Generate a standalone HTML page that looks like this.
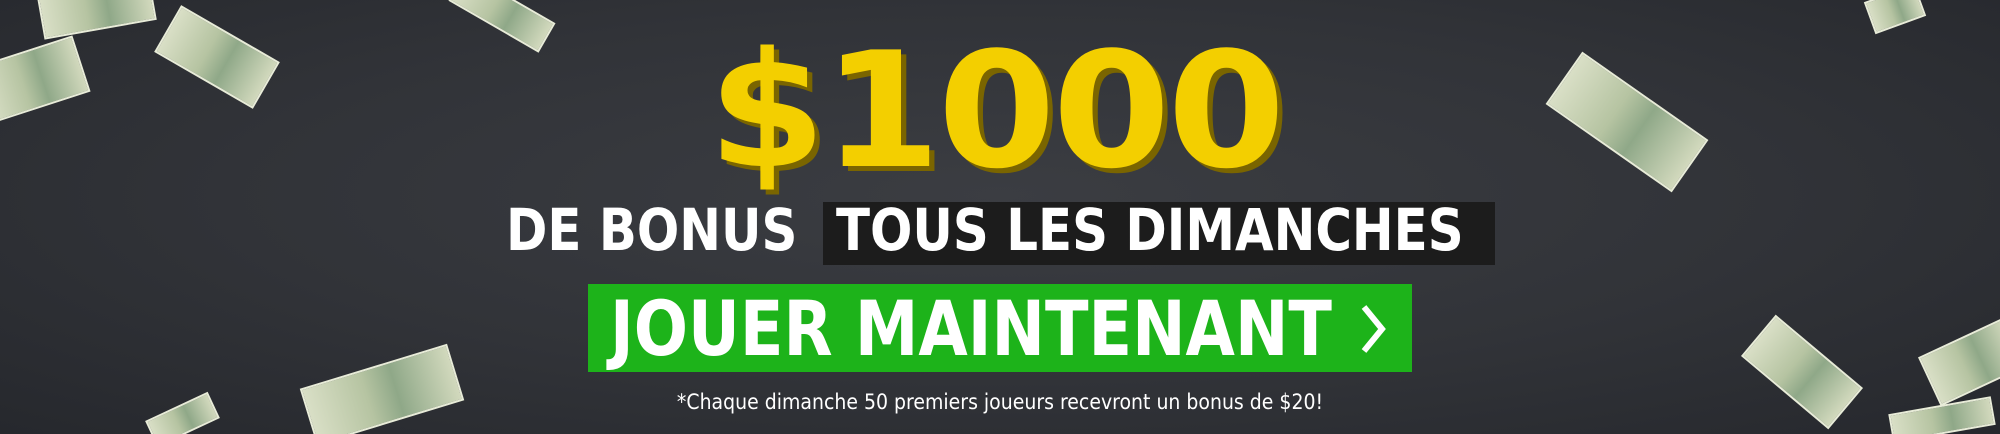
<!DOCTYPE html>
<html style="background:#2f3137;height:434px;overflow:hidden"><head><meta charset="utf-8"><style>
html,body{margin:0;padding:0}
body{width:2000px;height:434px;overflow:hidden;background:#2f3137;font-family:"DejaVu Sans","Liberation Sans",sans-serif}
.wrap{position:relative;width:2000px;height:434px;overflow:hidden}
.bg{position:absolute;left:0;top:0;width:2000px;height:434px;background:radial-gradient(ellipse at 50% 45%,#3b3d42 0%,#313338 55%,#26282d 100%)}
.t{position:absolute;white-space:nowrap;font-weight:bold}
.big{left:708px;top:31px;font-size:160px;color:#f3cf00;letter-spacing:-3px;text-shadow:5px 5px 0 #7a6500;transform:scaleX(1.06);transform-origin:left top;line-height:1}
.dark{position:absolute;left:823px;top:202px;width:672px;height:63px;background:#1c1c1c}
.l2{top:200px;font-size:58px;color:#fff;line-height:60px;transform:scaleX(0.86);transform-origin:left top}
.btn{position:absolute;left:588px;top:284px;width:824px;height:88px;background:#1db31a}
.l3{left:610px;top:289px;font-size:76px;color:#fff;line-height:80px;transform:scaleX(0.84);transform-origin:left top}
.foot{left:0;width:2000px;text-align:center;top:390px;font-size:21px;color:#fff;font-weight:normal;transform:scaleX(0.9);transform-origin:center top}
.bill{position:absolute;background:linear-gradient(90deg,#d9dfc6,#b6c4a2 40%,#8fa888 60%,#d2d9bd);border:2px solid #e8ecd8}
</style></head><body><div class="wrap">
<div class="bg"></div>
<div class="bill" style="left:-20px;top:50px;width:100px;height:55px;transform:rotate(-18deg)"></div>
<div class="bill" style="left:40px;top:-12px;width:110px;height:38px;transform:rotate(-10deg)"></div>
<div class="bill" style="left:160px;top:30px;width:110px;height:50px;transform:rotate(30deg)"></div>
<div class="bill" style="left:305px;top:365px;width:150px;height:55px;transform:rotate(-17deg)"></div>
<div class="bill" style="left:148px;top:405px;width:65px;height:25px;transform:rotate(-25deg)"></div>
<div class="bill" style="left:450px;top:-5px;width:100px;height:30px;transform:rotate(30deg)"></div>
<div class="bill" style="left:1550px;top:90px;width:150px;height:60px;transform:rotate(35deg)"></div>
<div class="bill" style="left:1745px;top:345px;width:110px;height:50px;transform:rotate(40deg)"></div>
<div class="bill" style="left:1925px;top:335px;width:90px;height:50px;transform:rotate(-25deg)"></div>
<div class="bill" style="left:1868px;top:-8px;width:50px;height:30px;transform:rotate(-20deg)"></div>
<div class="bill" style="left:1890px;top:405px;width:100px;height:25px;transform:rotate(-10deg)"></div>
<div class="t big">$1000</div>
<div class="dark"></div>
<div class="t l2" style="left:506px">DE BONUS</div>
<div class="t l2" style="left:836px">TOUS LES DIMANCHES</div>
<div class="btn"></div>
<div class="t l3">JOUER MAINTENANT</div>
<svg style="position:absolute;left:1358px;top:303px" width="30" height="52" viewBox="0 0 30 52"><path d="M6 4 L24 26 L6 48" fill="none" stroke="#fff" stroke-width="6"/></svg>
<div class="t foot">*Chaque dimanche 50 premiers joueurs recevront un bonus de $20!</div>
</div></body></html>
